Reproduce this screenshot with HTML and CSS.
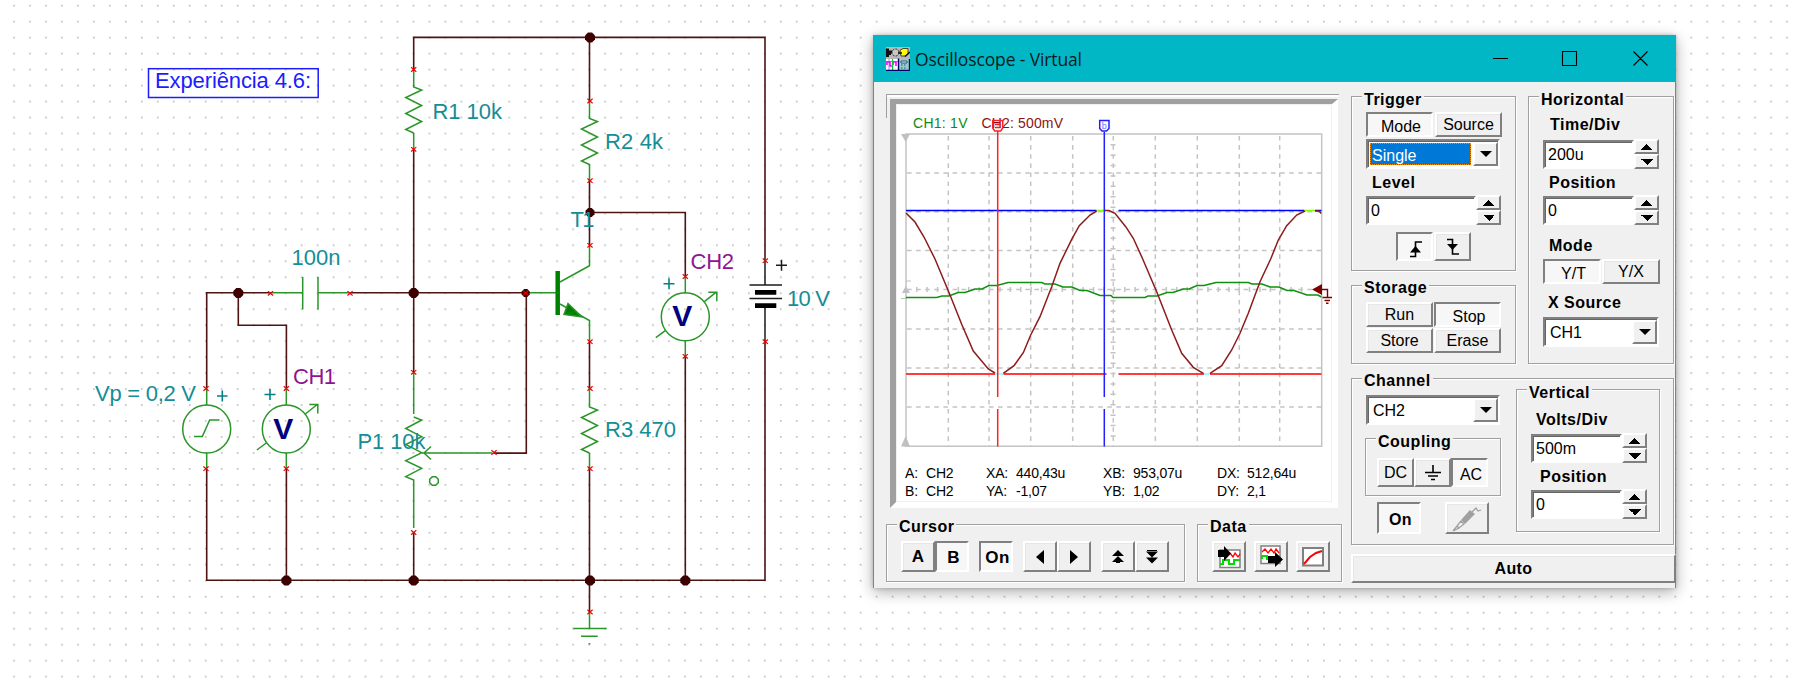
FILE: index.html
```
<!DOCTYPE html>
<html lang="en">
<head>
<meta charset="utf-8">
<title>Oscilloscope - Virtual</title>
<link rel="stylesheet" href="styles.css">
</head>
<body>
<div class="workspace">
<svg class="schematic" width="1801" height="681" viewBox="0 0 1801 681">
  <defs>
    <pattern id="dots" x="13.2" y="4.8" width="15.973" height="15.973" patternUnits="userSpaceOnUse"><rect width="1.7" height="1.7" fill="#c0c0c0"/></pattern>
    <path id="zig" d="M0 0V2L8 5L-8 12.5L8 20.5L-8 28.5L8 36.5L-8 44.500L0 48"/>
    <path id="x" d="M-2.6 -2.200L2.6 2.200M-2.600 2.200L2.600 -2.200"/>
    <path id="node" d="M-2 -5H2L5 -2V2L2 5H-2L-5 2V-2Z"/>
    <g id="meter">
      <circle r="24"/><path d="M0 -40V-24M0 24V40M19 -15L31 -24.500M23 -24.500H31.500V-15.500M-20 14L-29.500 21"/>
    </g>
  </defs>
  <rect width="1801" height="681" fill="url(#dots)"/>
  <g class="part">
    <path d="M413.700 71V86M413.700 133V149"/><use href="#zig" x="413.700" y="85"/>
    <path d="M589.500 102V117M589.500 164V180"/><use href="#zig" x="589.500" y="116.500"/>
    <path d="M589.500 388V405M589.500 453V468"/><use href="#zig" x="589.500" y="405"/>
    <path d="M271 292.700H302.700M302.700 277V309.500M318 277V309.500M318 292.700H350"/>
    <path d="M413.700 372V414M413.700 417L421.700 420L405.700 428.500L421.700 436.700L405.700 444.500L421.700 452.700L405.700 460.700L421.700 468.300L405.700 476.700L413.700 480V528"/>
    <path d="M422 453H492M431 446.500L424 453L431 459.500"/>
    <path d="M432.300 476.700H435.700L438.300 479.300V482.700L435.700 485.300H432.300L429.700 482.700V479.300Z"/>
    <circle cx="206.700" cy="429" r="24"/>
    <path d="M206.700 388V405M206.700 453V469M194 436.500H202.300L209.700 420H219.500"/>
    <use href="#meter" x="286.300" y="429"/><use href="#meter" x="685.300" y="316.700"/>
    <path d="M526 292.700H557M589.500 245V265.700L560 282M560 304L589.500 320.500V342"/>
    <path class="base" d="M557.700 271V315"/>
    <path class="solid" d="M568 303.500L582 317L564 314.500Z"/>
    <path d="M589.500 612V628.500M573.300 628.600H606.700M581 636.300H597.700M588.700 643.700H590.300"/>
  </g>
  <g class="wire">
    <path d="M413.700 71V37.400H765V261M589.500 37.400V102M413.700 149V372M206.700 388V292.700H271M238.300 292.700V325.300H286.400V388M350 292.700H526.300V453.100H494M589.500 180V245M589.500 212.500H685.300V276M206.700 469V580.300H765V342M286.400 469V580.300M413.700 532V580.300M589.500 342V388M589.500 468V612M685.300 356V580.300"/>
  </g>
  <g class="nodes">
    <use href="#node" x="590" y="37.400"/><use href="#node" x="238.300" y="293"/><use href="#node" x="413.700" y="293"/>
    <use href="#node" transform="translate(525.700 293) scale(.8)"/><use href="#node" transform="translate(590 212.500) scale(.9)"/>
    <use href="#node" x="286.400" y="580.500"/><use href="#node" x="413.700" y="580.500"/><use href="#node" x="590" y="580.500"/><use href="#node" x="685.300" y="580.500"/>
  </g>
  <g class="battery">
    <path d="M765 261V285M749.500 285H782M749.500 298.500H782M765 308V342M776 265.300H787M781.500 259.800V270.800"/>
    <path class="plate" d="M755 292.300H776.300M755 305.700H776.300"/>
  </g>
  <g class="pin">
    <use href="#x" x="413.700" y="69.500"/><use href="#x" x="413.700" y="149.300"/><use href="#x" x="590" y="101"/><use href="#x" x="590" y="180.700"/>
    <use href="#x" x="590" y="245.300"/><use href="#x" x="270.500" y="293.300"/><use href="#x" x="350" y="293.300"/><use href="#x" x="525.700" y="293"/>
    <use href="#x" x="590" y="341.700"/><use href="#x" x="590" y="388.500"/><use href="#x" x="590" y="468.700"/><use href="#x" x="590" y="612"/>
    <use href="#x" x="685.300" y="276.500"/><use href="#x" x="685.300" y="356.300"/><use href="#x" x="765.300" y="260.700"/><use href="#x" x="765.300" y="341.700"/>
    <use href="#x" x="206" y="388.500"/><use href="#x" x="206" y="468.700"/><use href="#x" x="286.300" y="388.500"/><use href="#x" x="286.300" y="468.700"/>
    <use href="#x" x="413.700" y="372.300"/><use href="#x" x="413.700" y="532.500"/><use href="#x" x="494" y="452.500"/>
  </g>
  <path class="plus" d="M217 396H227.500M222.300 390.500V401.500M264.500 394.500H275.500M270 389V400M663.500 283.700H674.500M669 278.200V289.200"/>
  <g class="label">
    <text x="432.500" y="118.700" textLength="69.500">R1 10k</text>
    <text x="605" y="148.700" textLength="58">R2 4k</text>
    <text x="605" y="437" textLength="71">R3 470</text>
    <text x="570.500" y="227" textLength="24">T1</text>
    <text x="291.500" y="265" textLength="49">100n</text>
    <text x="95" y="401" textLength="101">Vp = 0,2 V</text>
    <text x="357.500" y="448.700" textLength="68">P1 10k</text>
    <text x="787" y="306.300" textLength="43">10 V</text>
  </g>
  <g class="label channel"><text x="293" y="384.300" textLength="43">CH1</text><text x="690.500" y="268.700" textLength="43.500">CH2</text></g>
  <g class="volt"><text x="283.300" y="438.700">V</text><text x="682.300" y="326">V</text></g>
  <rect class="note-box" x="148.500" y="68.700" width="169.700" height="28.800"/>
  <text class="note" x="155" y="87.500" textLength="156">Experiência 4.6:</text>
</svg>

<section class="window">
  <header class="titlebar">
    <svg class="app-icon" width="24" height="24" viewBox="0 0 24 24">
      <rect width="24" height="24" fill="#b8b8b8"/><path d="M0 1.500H3V4H5V8H3V10H0Z" fill="#111"/><path d="M0 5H7" stroke="#111" stroke-width="3"/>
      <circle cx="9.500" cy="5.500" r="3.500" fill="#c8c8c8" stroke="#222" stroke-dasharray="2 1.200"/><path d="M14 3.500L17 1.500H22V7L20 9H15Z" fill="#ff0" stroke="#222" stroke-width=".8"/><path d="M12 6H16M19 9.500L24 5" stroke="#111" stroke-width="1.500"/>
      <rect y="12" width="12" height="11" fill="#fff"/><path d="M1 18V15H4V19H6M7 18V15H10V19" stroke="#f0f" stroke-width="1.600" fill="none"/><path d="M0 14.500H12M3 12V23" stroke="#56c" stroke-width=".7"/><path d="M6.500 12V23" stroke="#0c4" stroke-width="1.200"/>
      <rect x="13" y="12" width="10" height="11" fill="#9cc"/><path d="M15 14H21V16H15ZM15 18H16.500M18 18H19.500M15 21H16.500M18 21H19.500" stroke="#257" fill="#dff"/><path d="M12.500 11.500V24M23.500 12V23.500H0" stroke="#006" stroke-width="1.400" fill="none"/>
    </svg>
    <h1 class="title">Oscilloscope - Virtual</h1>
    <svg class="window-controls" width="155" height="16" viewBox="0 0 155 16"><path d="M0 7.500H15M69.500 .5H83.500V14.500H69.500ZM154.500 .5L140.500 14.500M140.500 .5L154.500 14.500"/></svg>
  </header>
  <div class="content">
    <div class="left">
      <div class="scope">
        <div class="screen">
          <svg class="graph" width="436" height="350" viewBox="896 104 436 350">
            <g class="channels"><text x="913" y="128.300" fill="#108a10" textLength="54.500">CH1: 1V</text><text x="981.500" y="128.300" fill="#8a1414" textLength="81.500">CH2: 500mV</text></g>
            <path class="frame" d="M906 134H1321.700V446.300H906Z"/>
            <path class="grid" d="M948.300 136V446M989 136V446M1030.700 136V446M1072.700 136V446M1113.300 136V446M1155.300 136V446M1197.300 136V446M1239.300 136V446M1279.700 136V446"/>
            <path class="grid" d="M907 173H1321M907 211.700H1321M907 250.500H1321M907 289.500H1321M907 329H1321M907 368H1321M907 407H1321"/>
            <path class="ticks" d="M916 289.500H1310"/><path class="ticks" d="M1113 144V440"/>
            <path d="M901 134H910L905.700 142ZM901 446.500H910L905.700 436ZM902 293H910L905.700 286ZM901 298H907V299H901Z" fill="#c0c0c0"/><path d="M906 281H911" stroke="#c0c0c0"/>
            <g class="trace">
              <path stroke="#0000ff" d="M906 210.500H1096.500M1118.500 210.500H1304M1315 210.500H1321.500"/><path stroke="#80ff00" d="M1096.500 210.500H1106M1304 210.500H1315"/>
              <path stroke="#ff3c3c" stroke-width="2" d="M906 374H995M1003.500 374H1106.500M1118.500 374H1204M1210 374H1321.500"/><path stroke="#80ffff" d="M995 374H1003.500M1204 374H1210"/>
              <path stroke="#109010" d="M906 297.500H936.700L942 296H949L958 292.500H965L975 289H982L989 285.500H997L1008 282.500H1041.700L1045 284H1055L1063 287H1072L1080 290.500H1087L1100 295.500H1111L1113 297.500H1145L1148 296H1157L1167 292.500H1173L1183 289H1189L1197 285.500H1204L1216 282.500H1248.300L1252 284H1262L1270 287H1279L1287 290.500H1294L1307 295H1318L1321.300 297"/>
              <path stroke="#8c1c1c" d="M906 213L915 222L924 237L935 259L949.300 293.300L962 325L973.300 351L988.300 369L995 373M1003.300 373.300L1014 365.700L1023.300 352.700L1030.700 335L1040 316.700L1051.700 286.700L1060 263.300L1071.700 239.300L1079.300 225.700L1090 215L1096.700 211M1105 210.500H1109L1115 213.300L1125.700 226.700L1133.300 238.300L1142.700 259L1157.300 293.300L1171.700 330L1181.700 353.300L1193.300 367.300L1203.300 373.300M1210 373.300L1221.700 365.700L1231.700 350L1240 333.300L1248.300 313.300L1260 281.700L1270.700 259L1278.300 240L1286.700 225.700L1296.700 215L1305 211M1315 211H1319L1321.300 213.500"/>
            </g>
            <g class="cursors">
              <path stroke="#ff2020" d="M997.700 131V397M997.700 409V446.500M992.700 120.500H1002.700V128L1000.700 131H994.700L992.700 128Z"/><path stroke="#f02020" d="M995 124.500H1000.500M995 127.500H1000.500"/>
              <path stroke="#2020ff" d="M1104.300 132V397M1104.300 409V446.500M1099.700 120.500H1109V128.500L1106.500 131H1102L1099.700 128.500Z"/><text x="1104.300" y="129" text-anchor="middle" font-size="9" fill="#7070ff">b</text>
            </g>
            <path d="M1312 289.500L1322 284V295Z" fill="#800000"/><path d="M1321 289.500H1327.500V297M1322.500 297.500H1332M1324.500 300.500H1330M1326 303.300H1328.500" stroke="#800000" stroke-width="1.400" fill="none"/>
          </svg>
          <div class="readout">
            <span>A:</span><span>CH2</span><span>XA:</span><span>440,43u</span><span>XB:</span><span>953,07u</span><span>DX:</span><span>512,64u</span>
            <span>B:</span><span>CH2</span><span>YA:</span><span>-1,07</span><span>YB:</span><span>1,02</span><span>DY:</span><span>2,1</span>
          </div>
        </div>
      </div>
      <div class="bottom-row">
        <div class="group cursor-group">
          <div class="legend">Cursor</div>
          <div class="row">
            <button class="btn bold">A</button><button class="btn bold down">B</button><button class="btn bold down gap-s">On</button>
            <button class="btn gap-s"><svg width="10" height="16"><path d="M9 1V15L1 8Z"/></svg></button><button class="btn"><svg width="10" height="16"><path d="M1 1V15L9 8Z"/></svg></button>
            <button class="btn gap-s"><svg width="12" height="14"><path d="M6 0L12 6H0ZM6 6L12 12H0ZM4 11H8V13H4Z"/></svg></button><button class="btn"><svg width="12" height="14"><path d="M6 13.500L12 7.500H0ZM6 7.500L12 1.500H0ZM1 0H11V2H1Z"/></svg></button>
          </div>
        </div>
        <div class="group data-group">
          <div class="legend">Data</div>
          <div class="row data-row">
            <button class="btn"><svg width="26" height="24" viewBox="0 0 26 24"><path d="M4 5H24V22.500H4Z" fill="#fff" stroke="#808080" stroke-width="1.500"/><path d="M14 8L17 12L19 8L22 12L24 9" stroke="red" fill="none" stroke-width="1.300"/><path d="M4 19H7V15H13V19H18V15H24" stroke="#0d0" fill="none" stroke-width="2"/><path d="M2 5H8V1L15 8.500L8 16V12H2Z"/></svg></button>
            <button class="btn"><svg width="26" height="24" viewBox="0 0 26 24"><path d="M3 1H22V18.500H3Z" fill="#fff" stroke="#808080" stroke-width="1.500"/><path d="M4 7L7 4L10 8L13 4L16 8L18 4L21 8" stroke="red" fill="none" stroke-width="1.300"/><path d="M4 14V11H9V14H13" stroke="#0d0" fill="none" stroke-width="2"/><path d="M10 11H17V7L25 14.500L17 22V18H10Z"/></svg></button>
            <button class="btn"><svg width="22" height="20" viewBox="0 0 22 20"><path d="M1 1H21V18.500H1Z" fill="#fff" stroke="#808080" stroke-width="2"/><path d="M2 17L8 10L14 6L20 4" stroke="red" fill="none" stroke-width="2"/></svg></button>
          </div>
        </div>
      </div>
    </div>
    <div class="right">
      <div class="top-groups">
        <div class="stack">
          <div class="group trigger">
            <div class="legend">Trigger</div>
            <div class="row tabs"><button class="btn down">Mode</button><button class="btn">Source</button></div>
            <div class="combo selected"><span>Single</span><i class="drop"></i></div>
            <div class="caption inset">Level</div>
            <div class="spin"><span>0</span><i class="arrows"></i></div>
            <div class="row slope">
              <button class="btn down"><svg width="16" height="18"><path class="line" d="M2 16.500H7.500V2H14"/><path d="M7.500 6L13 12.500H2Z"/></svg></button>
              <button class="btn"><svg width="16" height="18"><path class="line" d="M2 1.500H7.500V16H14"/><path d="M7.500 12L13 6H2Z"/></svg></button>
            </div>
          </div>
          <div class="group storage">
            <div class="legend">Storage</div>
            <div class="pair"><button class="btn">Run</button><button class="btn down">Stop</button><button class="btn">Store</button><button class="btn">Erase</button></div>
          </div>
        </div>
        <div class="group horizontal">
          <div class="legend">Horizontal</div>
          <div class="caption time">Time/Div</div>
          <div class="spin"><span>200u</span><i class="arrows"></i></div>
          <div class="caption">Position</div>
          <div class="spin"><span>0</span><i class="arrows"></i></div>
          <div class="caption mode">Mode</div>
          <div class="row tabs"><button class="btn down">Y/T</button><button class="btn">Y/X</button></div>
          <div class="caption xsource">X Source</div>
          <div class="combo"><span>CH1</span><i class="drop"></i></div>
        </div>
      </div>
      <div class="group channel-group">
        <div class="legend">Channel</div>
        <div class="channel-body">
          <div class="channel-left">
            <div class="combo"><span>CH2</span><i class="drop"></i></div>
            <div class="group coupling">
              <div class="legend">Coupling</div>
              <div class="row"><button class="btn">DC</button><button class="btn"><svg width="18" height="16"><path class="line" d="M9 0V7M1 7.500H17M4 11H14M7 14.500H11"/></svg></button><button class="btn down">AC</button></div>
            </div>
            <div class="row switches">
              <button class="btn bold down">On</button>
              <button class="btn"><svg class="probe" width="30" height="26" viewBox="0 0 30 26"><path d="M1 25L5 20L7 22ZM5 20L9 15L12 18L7 22Z" fill="#f0f0f0"/><path class="body" d="M10 14L18 5L22 8L13 17Z"/><path d="M20 6L24 2L26 5L29 4" fill="none"/></svg></button>
            </div>
          </div>
          <div class="group vertical">
            <div class="legend">Vertical</div>
            <div class="caption volts">Volts/Div</div>
            <div class="spin"><span>500m</span><i class="arrows"></i></div>
            <div class="caption pos">Position</div>
            <div class="spin"><span>0</span><i class="arrows"></i></div>
          </div>
        </div>
      </div>
      <button class="btn bold auto">Auto</button>
    </div>
  </div>
</section>
</div>
</body>
</html>
```
FILE: styles.css
```
* { box-sizing: border-box; }
body { margin: 0; background: #fff; font: 16px/16px "Liberation Sans", Arial, sans-serif; color: #000; overflow: hidden; }
.workspace { position: relative; width: 1801px; height: 681px; overflow: hidden; }
.schematic { display: block; }
.schematic g { fill: none; }
.schematic .part { stroke: #2a962a; stroke-width: 1.5; }
.schematic .part .base { stroke: #008000; stroke-width: 4.5; }
.schematic .part .solid { fill: #008000; }
.schematic .wire { stroke: #4d1414; stroke-width: 1.6; }
.schematic .nodes { fill: #3c0000; }
.schematic .battery { stroke: #1c1c1c; stroke-width: 1.5; }
.schematic .battery .plate { stroke: #000; stroke-width: 4.8; }
.schematic .pin { stroke: #f00000; stroke-width: 1.2; }
.plus { stroke: #008284; stroke-width: 1.6; }
.schematic .label { fill: #158d96; font-size: 22px; }
.schematic .channel { fill: #901490; }
.schematic .volt { fill: #000080; font-size: 30px; font-weight: bold; text-anchor: middle; }
.note-box { fill: none; stroke: #1c1cff; stroke-width: 1.5; }
.note { fill: #1c1cff; font-size: 22px; }

.window { position: absolute; left: 873px; top: 35px; width: 803px; height: 553px; display: flex; flex-direction: column; background: #f0f0f0; border: 1px solid #02b7c5; border-bottom: 0; box-shadow: 0 4px 14px rgba(0,0,0,.32), 0 0 4px rgba(0,0,0,.2); }
.titlebar { display: flex; align-items: center; height: 46px; padding: 0 27px 0 12px; background: #02b7c5; flex: none; }
.app-icon { margin-top: -1px; }
.title { flex: 1; margin: -1px 0 0 5px; font: 400 17.5px/24px "Open Sans", "Noto Sans", sans-serif; letter-spacing: -.13px; color: #0a1c20; }
.window-controls { fill: none; stroke: #000; stroke-width: 1.100; margin-top: -1px; }
.content { display: flex; flex: 1; gap: 9px; padding: 12px 0 0 12px; }
.left { width: 456px; }
.scope { width: 453px; height: 414px; padding: 4px 0 0 4px; border-top: 1px solid #a0a0a0; background: linear-gradient(#a0a0a0, #a0a0a0) 0 0 / 1px 23px no-repeat, linear-gradient(#fff, #fff) 0 0 / 100% 2px no-repeat; }
.screen { width: 448px; height: 409px; border: 5.5px solid; border-width: 5px 6px 6px; border-color: #a0a0a0 #fff #fff #a0a0a0; background: #fff; box-shadow: inset -1px -1px #f0f0f0, inset 1px 1px #f0f0f0; }
.graph { display: block; }
.graph path.frame { fill: none; stroke: #c4c4c4; stroke-width: 1.500; }
.grid { fill: none; stroke: #c4c4c4; stroke-width: 1.500; stroke-dasharray: 4.600 4.500; }
.ticks { fill: none; stroke: #c4c4c4; stroke-width: 5; stroke-dasharray: 1.500 8.900; }
.trace, .cursors { fill: none; stroke-width: 1.500; }
.channels { font-size: 14px; }
.readout { display: grid; grid-template-columns: 21px 60px 30px 87px 30px 84px 30px 60px; padding: 10px 0 0 9px; font-size: 14px; line-height: 18px; letter-spacing: -.2px; }

.group { border: 1px solid #a0a0a0; box-shadow: 1px 1px #fff, inset 1px 1px #fff; }
.legend { width: fit-content; margin: -5px 0 0 10px; padding: 0 2px; background: #f0f0f0; font-weight: bold; letter-spacing: .5px; white-space: nowrap; }
.caption { font-weight: bold; letter-spacing: .5px; white-space: nowrap; }
.row { display: flex; }
.btn { display: flex; align-items: center; justify-content: center; margin: 0; padding: 1px 0 0; font: inherit; color: #000; background: #f0f0f0; border: 2px solid; border-color: #fff #808080 #808080 #fff; border-radius: 0; box-shadow: inset 1px 1px #e6e6e6; }
.btn.down { border-color: #808080 #fff #fff #808080; background: #f7f7f7; padding: 4px 0 0 3px; box-shadow: none; }
.btn.bold { font-weight: bold; letter-spacing: .4px; }
.line { fill: none; stroke: #000; stroke-width: 1.600; }

.bottom-row { display: flex; gap: 12px; margin-top: 16px; }
.cursor-group { width: 299px; height: 58px; }
.data-group { width: 145px; height: 58px; }
.bottom-row .legend { margin-top: -6px; }
.bottom-row .row { margin: 6px 0 0 14px; }
.bottom-row .btn { width: 34px; height: 31px; padding-top: 0; }
.bottom-row .btn.down { padding-top: 2px; }
.bottom-row .bold { font-size: 17px; }
.bottom-row .gap-s { margin-left: 10px; }
.data-row { gap: 8px; }

.right { width: 325px; padding-top: 2px; }
.top-groups { display: flex; gap: 12px; }
.stack { display: flex; flex-direction: column; gap: 14px; }
.trigger { width: 165px; height: 175px; }
.trigger .tabs { gap: 2px; margin: 4px 0 2px 14px; }
.trigger .tabs .btn { width: 67px; height: 25px; }
.combo { display: flex; align-items: stretch; width: 134px; height: 30px; border: 2px solid; border-color: #808080 #fff #fff #808080; background: #fff; padding: 1px 0 1px 1px; box-shadow: inset 1px 1px #666; }
.combo span { flex: 1; padding: 5px 0 0 4px; }
.combo.selected span { background: #0078d7; color: #fff; outline: 1px dotted #f80; outline-offset: -1px; margin: 1px 2px 1px 1px; padding: 5px 0 0 2px; }
.drop { width: 25px; background: #f0f0f0; border: 2px solid; border-color: #fff #808080 #808080 #fff; display: grid; place-items: center; }
.drop::before { content: ""; border: 6px solid transparent; border-top-color: #000; border-bottom: 0; }
.trigger .combo { margin-left: 14px; }
.inset { margin: 6px 0 4px 20px; }
.spin { display: flex; width: 135px; height: 30px; }
.spin span { flex: 1; margin-top: 1px; border: 2px solid; border-color: #808080 #fff #fff #808080; box-shadow: inset 1px 1px #666; background: #fff; padding: 5px 0 0 3px; }
.arrows { width: 25px; display: grid; grid-template-rows: 15px 15px; }
.arrows::before, .arrows::after { content: ""; border: 2px solid; border-color: #fff #808080 #808080 #fff; background: #f0f0f0; }
.arrows::before, .arrows::after { background-color: #f0f0f0; background-image: conic-gradient(from 135deg at 50% 0, #000 90deg, transparent 0); background-size: 12px 6px; background-repeat: no-repeat; background-position: center 3px; }
.arrows::after { background-image: conic-gradient(from -45deg at 50% 100%, #000 90deg, transparent 0); }
.trigger .spin { margin-left: 14px; }
.slope { gap: 1px; margin: 7px 0 0 44px; }
.slope .btn { width: 37px; height: 29px; }
.storage { width: 165px; height: 79px; }
.storage .legend { margin-top: -6px; }
.pair { display: grid; grid-template-columns: 67px 67px; grid-auto-rows: 25px; gap: 1px; margin: 6px 0 0 14px; }
.horizontal { width: 146px; height: 268px; padding-left: 14px; }
.horizontal .legend { margin-left: -4px; }
.horizontal .caption { margin: 6px 0 4px 6px; }
.horizontal .time { margin: 9px 0 6px 7px; }
.horizontal .spin { width: 116px; }
.horizontal .mode { margin: 13px 0 5px 6px; }
.horizontal .tabs { gap: 1px; }
.horizontal .tabs .btn { width: 58px; height: 25px; }
.horizontal .xsource { margin: 11px 0 6px 5px; }
.horizontal .combo { width: 116px; }
.channel-group { width: 323px; height: 167px; margin-top: 14px; }
.channel-group > .legend { margin-top: -6px; }
.channel-body { display: flex; gap: 15px; }
.channel-left { width: 136px; margin-left: 13px; padding-top: 6px; }
.channel-left > .combo { margin-left: 1px; }
.coupling { width: 136px; height: 58px; margin-top: 13px; }
.coupling .row { margin: 8px 0 0 11px; }
.coupling .btn { width: 37px; height: 29px; }
.switches { margin: 6px 0 0 12px; gap: 24px; }
.switches .btn { width: 44px; height: 32px; }
.probe { stroke: #a0a0a0; stroke-width: 1.300; }
.probe .body { fill: #a0a0a0; }
.vertical { width: 144px; height: 143px; padding-left: 14px; }
.vertical .legend { margin-left: -4px; }
.vertical .spin { width: 116px; }
.vertical .volts { margin: 11px 0 5px 5px; }
.vertical .pos { margin: 6px 0 4px 9px; }
.auto { width: 325px; height: 29px; margin-top: 9px; }
```
